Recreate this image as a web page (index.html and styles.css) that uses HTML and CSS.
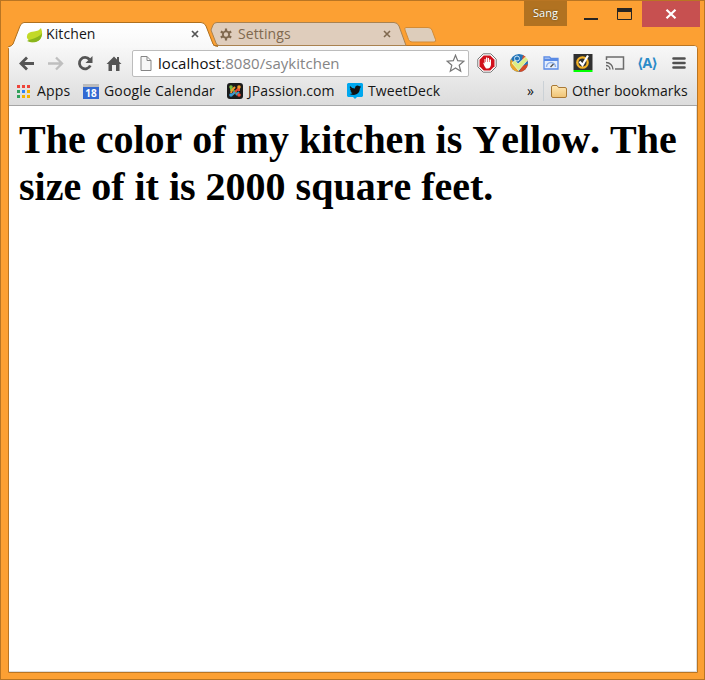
FILE: index.html
```html
<!DOCTYPE html>
<html lang="en">
<head>
<meta charset="utf-8">
<title>Kitchen</title>
<link rel="stylesheet" href="styles.css">
</head>
<body>
<div class="window">
  <header class="titlebar">
    <div class="tabs">
      <div class="tab active">
        <svg class="shape" width="214" height="26" viewBox="0 0 214 26"><defs><linearGradient id="tg" x2="0" y2="1"><stop stop-color="#fff"/><stop offset="1" stop-color="#f8f8f8"/></linearGradient></defs><path d="M0 26V25Q4 24 5 22L12 4Q13.5.5 16 .5H193Q196.500 .5 198 4L206 25V26Z" fill="url(#tg)"/><path d="M0 25Q4 24 5 22L12 4Q13.500 .5 16 .5H193Q196.500 .5 198 4L205 22Q206.500 24.500 210 24.500" fill="none" stroke="#ae701f"/></svg>
        <svg class="leaf" width="17" height="16" viewBox="0 0 17 16"><path d="M15 1Q18 9 13 13Q9 16 4 15L1 11Q0 5 8 4.500Q13 4 15 1" fill="#c2d928"/><path d="M16 6Q14 10 3 13L1 14Q5 16 10 15Q16 13 16 6" fill="#8ab51c"/></svg>
        <span class="label">Kitchen</span>
        <svg class="x" width="8" height="8" viewBox="0 0 8 8"><path d="M1 1L7 7M7 1L1 7" stroke="#555" stroke-width="1.700"/></svg>
      </div>
      <div class="tab idle">
        <svg class="shape" width="200" height="25" viewBox="0 0 200 25"><path d="M1 8L3 3Q4 .5 7 .5H184Q187.500 .5 189 4L196 23.500H9Q7 23.500 6 21Z" fill="#dfcdbc" stroke="#a98250"/></svg>
        <svg class="gear" width="12" height="13" viewBox="0 0 12 13"><circle cx="6" cy="6.500" r="3.100" fill="none" stroke="#80694f" stroke-width="1.800"/><path d="M6 .5V3M6 10V12.500M.8 3.500L3 4.800M9 8.200L11.200 9.500M.8 9.500L3 8.200M9 4.800L11.200 3.500" stroke="#80694f" stroke-width="2.200"/></svg>
        <span class="label">Settings</span>
        <svg class="x" width="8" height="8" viewBox="0 0 8 8"><path d="M1 1L7 7M7 1L1 7" stroke="#80694f" stroke-width="1.600"/></svg>
      </div>
      <svg class="newtab" width="33" height="16" viewBox="0 0 33 16"><path d="M2 .5H24Q27 .5 28 3L31.500 12.500Q32.500 15 30 15H8Q5.500 15 4.500 12.500L1 3Q0 .5 2 .5Z" fill="#ddcdbb" stroke="#d38b34"/></svg>
    </div>
    <div class="controls">
      <div class="user">Sang</div>
      <svg class="minmax" width="75" height="26" viewBox="0 0 75 26"><path d="M17 17H31V19H17Z" fill="#282522"/><path d="M50.500 7.500H64.500V18.500H50.500Z" fill="none" stroke="#282522"/><path d="M50 7H65V11H50Z" fill="#282522"/></svg>
      <div class="close"><svg width="12" height="10" viewBox="0 0 12 10"><path d="M1.500 .8L10.500 9.200M10.500 .8L1.500 9.200" stroke="#fff" stroke-width="2.200"/></svg></div>
    </div>
  </header>
  <div class="client">
    <div class="chrome">
      <div class="toolbar">
        <svg class="nav" width="124" height="34" viewBox="0 0 124 34"><g fill="none" stroke="#555" stroke-width="2.800"><path d="M12 17.500H25M18 11.500L12 17.500L18 23.500"/><path d="M39 17.500H52M47 11.500L53 17.500L47 23.500" stroke="#bfbfbf" stroke-width="2.300"/><path d="M80.500 13.500A5.700 5.700 0 1 0 81.300 19.500"/></g><path d="M83.500 10V17H76.500Z" fill="#555"/><path d="M97.500 18L105 10.500L108 13.500V11H110V15.500L112.500 18H110.500V25H107V19H103V25H99.500V18Z" fill="#555"/></svg>
        <div class="omnibox">
          <svg width="12" height="15" viewBox="0 0 12 15"><path d="M1 .5H7L11 4.500V14.500H1ZM7 .5V4.500H11" fill="#f7f7f7" stroke="#858585"/></svg>
          <span class="url"><b>localhost</b>:8080/saykitchen</span>
          <svg class="star" width="19" height="19" viewBox="0 0 19 19"><path d="M9.500 1.200L11.700 6.700L17.800 7.200L13.200 11.200L14.700 17.300L9.500 14L4.300 17.300L5.800 11.200L1.200 7.200L7.300 6.700Z" fill="#fff" stroke="#777" stroke-width="1.200"/></svg>
        </div>
        <div class="exts">
          <svg width="20" height="20" viewBox="0 0 20 20"><path d="M6.200 .8H13.800L19.200 6.200V13.800L13.800 19.200H6.200L.8 13.800V6.200Z" fill="#fff" stroke="#777"/><path d="M6.700 2.500H13.300L17.500 6.700V13.300L13.300 17.500H6.700L2.500 13.300V6.700Z" fill="#d1101b"/><path d="M6 9.500L7.500 10.500V6H8.500V9H9V4.500H10.200V9H10.700V5H12V9H12.500V6.500H14V12Q13 15.500 11 15.500H9Q7.500 14 6 9.500" fill="#fff"/></svg>
          <svg width="20" height="20" viewBox="0 0 20 20"><circle cx="10" cy="10" r="9" fill="#2374b8"/><path d="M2 6A9 9 0 0 0 10 19L7 12Z" fill="#e9a52b"/><path d="M14 2A9 9 0 0 1 18.500 9L13 7Z" fill="#d6532c"/><path d="M10 19A9 9 0 0 0 19 11L13 13Z" fill="#d44a26"/><circle cx="8" cy="5.500" r="2.500" fill="none" stroke="#cbe5f7"/><path d="M3 10L6 7.500L9 11L16.500 4L19 6.500L9.500 17.500Z" fill="#dcee83" stroke="#fafbe0" stroke-width=".7"/></svg>
          <svg width="20" height="20" viewBox="0 0 20 20"><path d="M3 16V4H8.500L10 5.500H17V16Z" fill="#e6effc" stroke="#5b8be5" stroke-width="1.300"/><path d="M3 5.500H17V8H3Z" fill="#5b8be5"/><path d="M5.500 14A4.500 4.500 0 0 1 14.500 14" fill="none" stroke="#8caee9" stroke-width="1.500"/><path d="M9.500 14L12.500 11" stroke="#555" stroke-width="1.500"/></svg>
          <svg width="20" height="20" viewBox="0 0 20 20"><path d="M.5 1H19.500V17H.5Z" fill="#303030"/><path d="M.5 17H19.500V19H.5Z" fill="#0f0"/><circle cx="9.500" cy="9.500" r="5.200" fill="none" stroke="#f5b326" stroke-width="2.300"/><path d="M6.500 8.500L9.500 12L15 2.500" fill="none" stroke="#fff" stroke-width="2.200"/></svg>
          <svg width="20" height="20" viewBox="0 0 20 20"><path d="M1.500 7V4H18.500V16H10" fill="none" stroke="#6c6c6c" stroke-width="1.500"/><path d="M1 9.500A7 7 0 0 1 8 16.500M1 12.500A4 4 0 0 1 5 16.500" fill="none" stroke="#666" stroke-width="1.400"/><path d="M1 14.500L3 17H1Z" fill="#666"/></svg>
          <div class="angle">⟨A⟩</div>
          <svg width="20" height="20" viewBox="0 0 20 20"><path d="M4.500 5.500H15.500M4.500 10H15.500M4.500 14.500H15.500" stroke="#505050" stroke-width="2.600" stroke-linecap="round"/></svg>
        </div>
      </div>
      <nav class="bookmarks">
        <svg class="apps" width="13" height="13" viewBox="0 0 13 13"><path d="M0 0H3V3H0ZM5 0H8V3H5ZM10 0H13V3H10Z" fill="#ee443a"/><path d="M0 5H3V8H0ZM0 10H3V13H0Z" fill="#31a15a"/><path d="M5 5H8V8H5Z" fill="#2e83f7"/><path d="M10 5H13V8H10ZM5 10H8V13H5ZM10 10H13V13H10Z" fill="#f5b400"/></svg>
        <span class="b-apps">Apps</span>
        <div class="cal">18</div>
        <span class="b-cal">Google Calendar</span>
        <svg class="joomla" width="16" height="16" viewBox="0 0 16 16"><rect width="16" height="16" rx="3" fill="#1b1b1b"/><g fill="none" stroke-width="2"><path d="M4 8V5L10 11" stroke="#62b440"/><path d="M8 4L5 7L4 10" stroke="#f19a2c"/><path d="M12 8V5L6 11" stroke="#e84833"/><path d="M5 12L8 9M9 12L12 9" stroke="#399bd3"/></g><circle cx="4" cy="4" r="1.800" fill="#79bd42"/><circle cx="12" cy="4" r="1.800" fill="#f19a2c"/><circle cx="4" cy="12" r="1.800" fill="#359ad8"/><circle cx="12" cy="12" r="1.800" fill="#ed4d35"/></svg>
        <span class="b-jp">JPassion.com</span>
        <svg class="td" width="16" height="16" viewBox="0 0 16 16"><path d="M1 0H15L16 1V13L15 14H10L8 16L6 14H1L0 13V1Z" fill="#00a8ef"/><path d="M3 3Q5 5.500 8 5.500Q8 2.500 10.500 2.500Q11.500 2.500 12.200 3.300L14 2.800L13 4.200L14 4.300L13 5.300Q12.500 11.500 7 12Q4.500 12 2.500 11Q4.500 11 5.500 10Q4 9.800 3.500 8.300H4.500Q3 7.500 3 5.800L3.700 6Q2.300 4.700 3 3" fill="#111"/></svg>
        <span class="b-td">TweetDeck</span>
        <span class="more">»</span>
        <i class="sep"></i>
        <svg class="folder" width="16" height="13" viewBox="0 0 16 13"><defs><linearGradient id="fg" x2="0" y2="1"><stop stop-color="#ffe9b6"/><stop offset="1" stop-color="#efc374"/></linearGradient></defs><path d="M.5 2Q.5 .5 2 .5H6L7.500 2.500H14Q15.500 2.500 15.500 4V11Q15.500 12.500 14 12.500H2Q.5 12.500 .5 11Z" fill="url(#fg)" stroke="#a97936"/></svg>
        <span class="b-other">Other bookmarks</span>
      </nav>
    </div>
    <main><h1>The color of my kitchen is Yellow. The size of it is 2000 square feet.</h1></main>
  </div>
</div>
</body>
</html>
```
FILE: styles.css
```css
* { box-sizing: border-box; }
body { margin: 0; font-family: "Open Sans", "Noto Sans", sans-serif; font-size: 14px; color: #151515; }
svg { display: block; flex: none; }
span { white-space: nowrap; flex: none; }
.window { width: 705px; height: 680px; border: 1px solid #b97523; background: #fca033; padding: 0 6px 6px 7px; display: flex; flex-direction: column; }
.titlebar { height: 44px; display: flex; justify-content: space-between; margin-right: -2px; flex: none; }
.tabs { display: flex; align-items: flex-start; padding-top: 21px; }
.tab { position: relative; height: 25px; display: flex; align-items: center; }
.shape { position: absolute; left: 0; top: 0; }
.tab > :not(.shape) { position: relative; }
.active { width: 202px; padding-left: 18px; z-index: 2; color: #151515; }
.idle { width: 195px; padding-left: 10px; color: #80694f; z-index: 1; }
.tab .label { line-height: 21px; padding-bottom: 2px; letter-spacing: .1px; }
.leaf { margin-right: 3px; }
.gear { margin-right: 6px; }
.tab > .x.x { position: absolute; top: 8px; }
.active > .x { left: 183px; }
.idle > .x { left: 173px; }
.newtab { margin: 5px 0 0 -1px; }
.controls { display: flex; align-items: flex-start; }
.user { width: 43px; height: 25px; background: #b17221; color: #fff; font: 11px/24px "Open Sans", sans-serif; text-align: center; text-shadow: 0 0 2px #442; }
.close { width: 58px; height: 26px; background: #c75050; display: flex; align-items: center; justify-content: center; }
.client { flex: 1; display: flex; flex-direction: column; border: 1px solid #b97523; border-radius: 4px 4px 0 0; background: #fff; box-shadow: inset -1px -1px #ddd; }
.chrome { height: 60px; flex: none; background: linear-gradient(#f8f8f8, #dcdcdc); border-bottom: 1px solid #a5a5a5; border-radius: 3px 3px 0 0; }
.toolbar { display: flex; height: 34px; align-items: center; }
.nav { margin-right: -1px; }
.omnibox { width: 337px; height: 27px; border: 1px solid #bcbcbc; border-radius: 2px; background: #fff; display: flex; align-items: center; padding: 0 3px 0 7px; }
.url { color: #858585; font-size: 15px; letter-spacing: .04px; margin-left: 6px; flex: 1; }
.url b { color: #111; font-weight: 400; }
.exts { display: flex; margin-left: 8px; gap: 12px; }
.angle { width: 20px; height: 20px; color: #2a8bc8; font: bold 14px/19px "Open Sans", "DejaVu Sans", sans-serif; display: flex; justify-content: center; letter-spacing: -.8px; }
.bookmarks { display: flex; height: 22px; align-items: center; padding-left: 8px; }
.bookmarks span { padding-bottom: 2px; }
.b-apps { margin: 0 12px 0 7px; width: 34px; letter-spacing: .2px; }
.cal { width: 16px; height: 15px; border-top: 3px solid #bcbcbc; background: #3269d2; color: #fff; font: bold 10px/12px "Open Sans", sans-serif; text-align: center; }
.b-cal { margin: 0 12px 0 5px; width: 111px; letter-spacing: .18px; }
.b-jp { margin: 0 12px 0 5px; width: 87px; letter-spacing: .08px; }
.b-td { margin-left: 5px; width: 72px; letter-spacing: .1px; }
.more { margin-left: 87px; width: 10px; }
.sep { width: 1px; height: 20px; background: #cbd1d6; margin: 0 7px 0 6px; }
.b-other { margin-left: 5px; letter-spacing: .05px; }
main { padding: 10px; }
h1 { margin: 0; font: bold 40px/47px "Liberation Serif", serif; font-kerning: none; color: #000; }
```
